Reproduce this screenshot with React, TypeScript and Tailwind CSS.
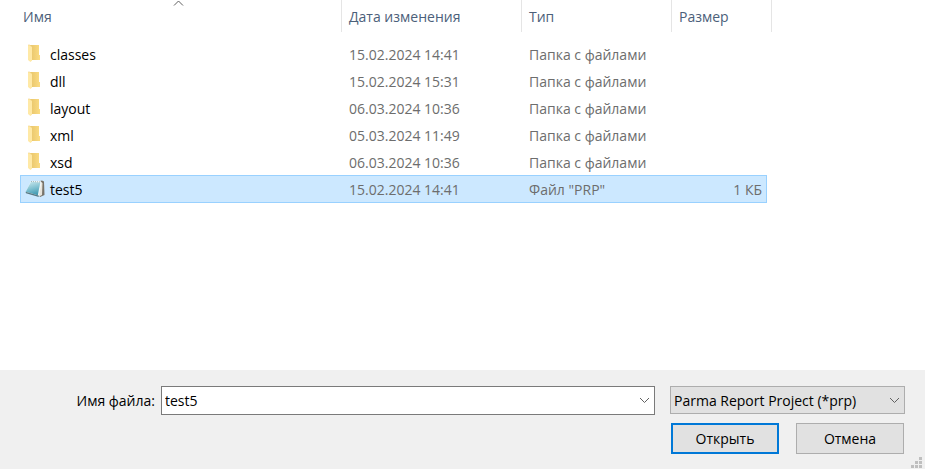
import { useState } from "react";

type Row = { name: string; date: string; type: string; size?: string };

const rows: Row[] = [
  { name: "classes", date: "15.02.2024 14:41", type: "Папка с файлами" },
  { name: "dll", date: "15.02.2024 15:31", type: "Папка с файлами" },
  { name: "layout", date: "06.03.2024 10:36", type: "Папка с файлами" },
  { name: "xml", date: "05.03.2024 11:49", type: "Папка с файлами" },
  { name: "xsd", date: "06.03.2024 10:36", type: "Папка с файлами" },
  { name: "test5", date: "15.02.2024 14:41", type: 'Файл "PRP"', size: "1 КБ" },
];

function FolderIcon() {
  return (
    <svg width="22" height="21" viewBox="0 0 22 21" className="shrink-0" aria-hidden="true">
      <defs>
        <linearGradient id="folderBack" x1="0" y1="0" x2="1" y2="0">
          <stop offset="0.3" stopColor="#ecca70" />
          <stop offset="1" stopColor="#fbdc82" />
        </linearGradient>
      </defs>
      <path d="M4 1h10v10h1v5H4z" fill="url(#folderBack)" />
      <path d="M3 1h1.500L7 3v13.500L5.500 18L3 16z" fill="#ffe9a6" />
      <path d="M3 1h1.500L7 3" fill="none" stroke="#f3d58a" strokeWidth="0.6" />
    </svg>
  );
}

function NotepadIcon() {
  return (
    <svg width="22" height="21" viewBox="0 0 22 21" className="shrink-0" aria-hidden="true">
      <defs>
        <linearGradient id="padCover" x1="0.300" y1="0" x2="0.600" y2="1">
          <stop offset="0" stopColor="#c3e4ea" />
          <stop offset="0.500" stopColor="#7fc0d0" />
          <stop offset="1" stopColor="#3d97b0" />
        </linearGradient>
      </defs>
      <path d="M15 1L17 0.500L19 1.500L19.500 15L15 17z" fill="#77736a" />
      <path d="M15.500 2L17.500 3L17 15L14 16.500z" fill="#e6e3da" />
      <path d="M6 1L15.500 1L16.500 2.500L14 16L0.500 12.500z" fill="#f1f7f7" />
      <path d="M6 1.800L15.300 2.500L12.800 15.300L0.800 11.800z" fill="url(#padCover)" />
      <path d="M0.500 11.800L12.800 15.200L15 16.300L13 16.800L1 13.200z" fill="#587883" />
      <path d="M6 1.500L15.500 2" stroke="#9fb4b8" strokeWidth="1" strokeDasharray="1 1" />
    </svg>
  );
}

function Chevron({ up = false, className = "" }: { up?: boolean; className?: string }) {
  return (
    <svg width="11" height="7" viewBox="0 0 11 7" className={className} aria-hidden="true">
      <path
        d={up ? "M1 5.500L5.500 1L10 5.500" : "M1 1L5.500 5.500L10 1"}
        fill="none"
        stroke="#606060"
        strokeWidth="1"
      />
    </svg>
  );
}

function ResizeGrip() {
  const dots = [[8, 0], [4, 4], [8, 4], [0, 8], [4, 8], [8, 8]];
  return (
    <svg width="11" height="11" className="absolute right-[3px] bottom-px" aria-hidden="true">
      {dots.map(([x, y]) => (
        <rect key={`${x}-${y}`} x={x} y={y} width="3" height="3" fill="#bfbfbf" />
      ))}
    </svg>
  );
}

export default function App() {
  const [fileName, setFileName] = useState("test5");
  const head = "h-8 border-r border-[#e5e5e5] pt-0.5 pl-[7px] text-left font-normal";

  return (
    <main className="flex min-h-screen flex-col bg-white font-['Open_Sans','Noto_Sans',sans-serif] text-sm text-black">
      <section className="grow pl-5">
        <table className="table-fixed border-separate border-spacing-0 w-[752px]">
          <colgroup>
            <col className="w-[322px]" />
            <col className="w-[180px]" />
            <col className="w-[150px]" />
            <col className="w-[95px]" />
            <col className="w-[5px]" />
          </colgroup>
          <thead className="text-[#4c607a]">
            <tr>
              <th className="relative h-8 border-r border-[#e5e5e5] pt-0.5 pl-[3px] text-left font-normal">
                Имя
                <Chevron up className="absolute top-0 left-[153px]" />
              </th>
              <th className={head}>Дата изменения</th>
              <th className={head}>Тип</th>
              <th className={head} colSpan={2}>Размер</th>
            </tr>
          </thead>
          <tbody className="text-[#6d6d6d]">
            <tr>
              <td className="h-2" colSpan={5} />
            </tr>
            {rows.map((row) => {
              const selected = row.name === fileName;
              const cell = selected
                ? "h-7 border-y border-[#99d1ff] bg-[#cce8ff] pt-0.5"
                : "h-[27px] pt-0.5";
              return (
                <tr key={row.name} aria-selected={selected}>
                  <td className={`${cell} text-black ${selected ? "border-l pl-1" : "pl-[5px]"}`}>
                    <div className="flex items-center gap-[3px]">
                      {row.size ? <NotepadIcon /> : <FolderIcon />}
                      <span>{row.name}</span>
                    </div>
                  </td>
                  <td className={`${cell} pl-[7px]`}>{row.date}</td>
                  <td className={`${cell} pl-[7px]`}>{row.type}</td>
                  <td className={`${cell} pr-1 text-right ${selected ? "border-r" : ""}`}>{row.size}</td>
                  <td className="p-0" />
                </tr>
              );
            })}
          </tbody>
        </table>
      </section>

      <footer className="relative flex flex-col gap-2 bg-[#f0f0f0] pt-4 pr-5 pb-[15px]">
        <div className="flex items-start">
          <label htmlFor="file-name" className="w-[161px] pt-px pr-1.5 text-right leading-7">
            Имя файла:
          </label>
          <div className="flex h-[29px] min-w-0 flex-1 border border-[#7a7a7a] bg-white">
            <input
              id="file-name"
              type="text"
              value={fileName}
              onChange={(e) => setFileName(e.target.value)}
              className="min-w-0 flex-1 pl-[3px] outline-none"
            />
            <button type="button" aria-label="Имя файла" className="flex w-5 items-center justify-center">
              <Chevron />
            </button>
          </div>
          <div className="relative ml-[15px] w-[235px]">
            <select
              aria-label="Тип"
              className="h-7 w-full appearance-none border border-[#adadad] bg-[#e1e1e1] pt-0.5 pl-[3px] outline-none"
            >
              <option>Parma Report Project (*prp)</option>
            </select>
            <Chevron className="pointer-events-none absolute top-[11px] right-[5px]" />
          </div>
        </div>
        <div className="flex justify-end gap-[17px] pr-px">
          <button type="button" className="h-[31px] w-[108px] border-2 border-[#0078d7] bg-[#e1e1e1]">
            Открыть
          </button>
          <button type="button" className="h-[31px] w-[108px] border border-[#adadad] bg-[#e1e1e1]">
            Отмена
          </button>
        </div>
        <ResizeGrip />
      </footer>
    </main>
  );
}
